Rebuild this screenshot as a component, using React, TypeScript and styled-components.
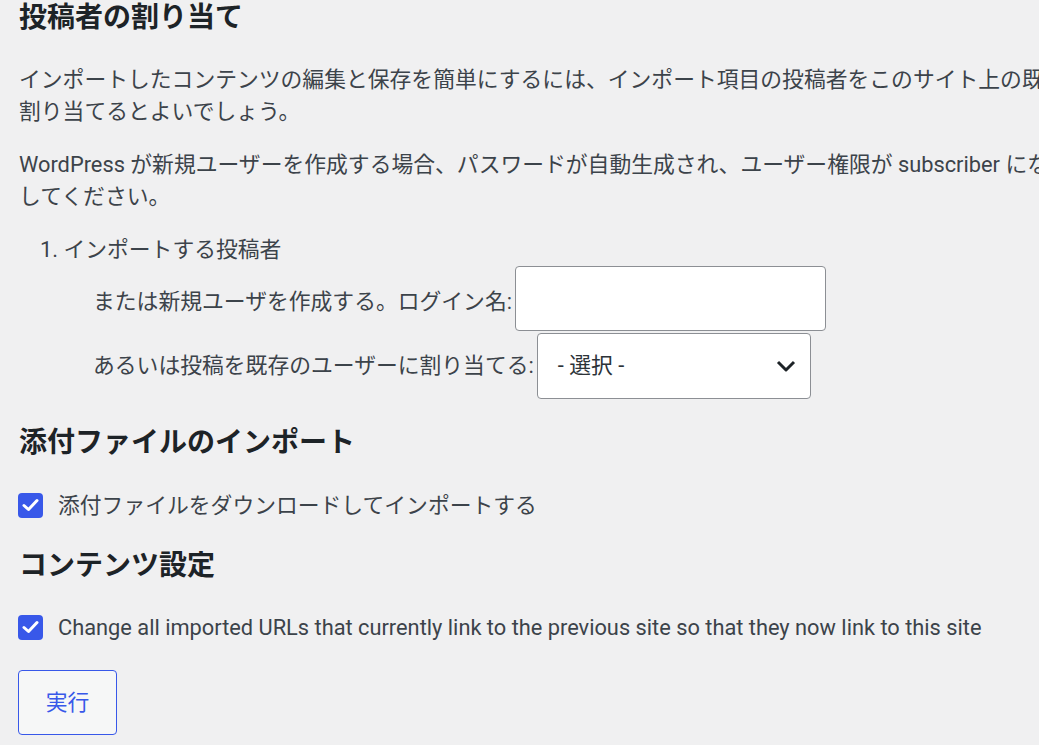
import React from "react";
import styled, { createGlobalStyle } from "styled-components";

const GlobalStyle = createGlobalStyle`
  html, body {
    margin: 0;
    padding: 0;
    background: #f0f0f1;
    overflow: hidden;
  }
  body {
    font-family: Roboto, "Noto Sans CJK JP", sans-serif;
    color: #3c434a;
    font-size: 21.8px;
    line-height: 31.2px;
  }
`;

const Page = styled.div`
  padding: 0 0 0 19px;
  width: 1400px;
`;

const Heading = styled.h2<{ $top?: number }>`
  margin: ${(p) => p.$top ?? 0}px 0 0;
  font-size: 28px;
  line-height: 36px;
  font-weight: 700;
  color: #1d2327;
`;

const Para = styled.p<{ $top?: number }>`
  margin: ${(p) => p.$top ?? 0}px 0 0;
  white-space: nowrap;
`;

const AuthorList = styled.ol`
  margin: 22.6px 0 0;
  padding: 0 0 0 21px;
  list-style: none;
`;

const AuthorItem = styled.li``;

const Fields = styled.div`
  display: flex;
  flex-direction: column;
  gap: 2px;
  padding-left: 53px;
`;

const FieldRow = styled.label`
  display: flex;
  align-items: center;
  gap: 3px;
`;

const FieldLabel = styled.span<{ $shift?: number }>`
  position: relative;
  top: ${(p) => p.$shift ?? 0}px;
  white-space: nowrap;
`;

const TextInput = styled.input`
  box-sizing: border-box;
  width: 311px;
  height: 65px;
  border: 1px solid #8c8f94;
  border-radius: 4px;
  background: #fff;
  font: inherit;
  padding: 0 12px;
  margin: 0;
`;

const SelectBox = styled.div`
  box-sizing: border-box;
  width: 274px;
  height: 66px;
  border: 1px solid #8c8f94;
  border-radius: 4px;
  background: #fff;
  display: flex;
  align-items: center;
  justify-content: space-between;
  padding: 0 14px 0 20px;
  color: #2c3338;
`;

const CheckRow = styled.label<{ $top: number }>`
  display: flex;
  align-items: center;
  gap: 15px;
  margin-top: ${(p) => p.$top}px;
  white-space: nowrap;
  margin-left: -1px;
`;

const CheckBox = styled.span`
  width: 25px;
  height: 25px;
  border-radius: 4px;
  background: #3858e9;
  display: inline-flex;
  align-items: center;
  justify-content: center;
  flex: none;
`;

const Button = styled.button`
  margin-top: 27px;
  width: 99px;
  height: 65px;
  box-sizing: border-box;
  border: 1px solid #3858e9;
  border-radius: 4px;
  background: #f6f7f7;
  color: #3858e9;
  font: inherit;
  cursor: pointer;
  display: block;
  margin-left: -1px;
`;

const Check = () => (
  <svg width="17" height="14" viewBox="0 0 17 14">
    <path d="M2 7.5 L6.5 11.5 L15 2.5" fill="none" stroke="#fff" strokeWidth="3" strokeLinecap="round" strokeLinejoin="round" />
  </svg>
);

const Chevron = () => (
  <svg width="20" height="12" viewBox="0 0 20 12">
    <path d="M2 2 L10 10 L18 2" fill="none" stroke="#1d2327" strokeWidth="3" strokeLinejoin="round" />
  </svg>
);

export default function App() {
  return (
    <>
      <GlobalStyle />
      <Page>
        <Heading>投稿者の割り当て</Heading>
        <Para $top={28.4}>
          インポートしたコンテンツの編集と保存を簡単にするには、インポート項目の投稿者をこのサイト上の既存ユーザー (管理者アカウントなど) に
          <br />
          割り当てるとよいでしょう。
        </Para>
        <Para $top={22.6}>
          WordPress が新規ユーザーを作成する場合、パスワードが自動生成され、ユーザー権限が subscriber になります。必要であれば手動でユーザー情報を変更
          <br />
          してください。
        </Para>
        <AuthorList>
          <AuthorItem>
            1. インポートする投稿者
            <Fields>
              <FieldRow>
                <FieldLabel $shift={4}>または新規ユーザを作成する。ログイン名:</FieldLabel>
                <TextInput type="text" />
              </FieldRow>
              <FieldRow>
                <FieldLabel>あるいは投稿を既存のユーザーに割り当てる:</FieldLabel>
                <SelectBox>
                  <span>- 選択 -</span>
                  <Chevron />
                </SelectBox>
              </FieldRow>
            </Fields>
          </AuthorItem>
        </AuthorList>
        <Heading $top={26}>添付ファイルのインポート</Heading>
        <CheckRow $top={29}>
          <CheckBox>
            <Check />
          </CheckBox>
          添付ファイルをダウンロードしてインポートする
        </CheckRow>
        <Heading $top={27}>コンテンツ設定</Heading>
        <CheckRow $top={28}>
          <CheckBox>
            <Check />
          </CheckBox>
          Change all imported URLs that currently link to the previous site so that they now link to this site
        </CheckRow>
        <Button type="button">実行</Button>
      </Page>
    </>
  );
}
